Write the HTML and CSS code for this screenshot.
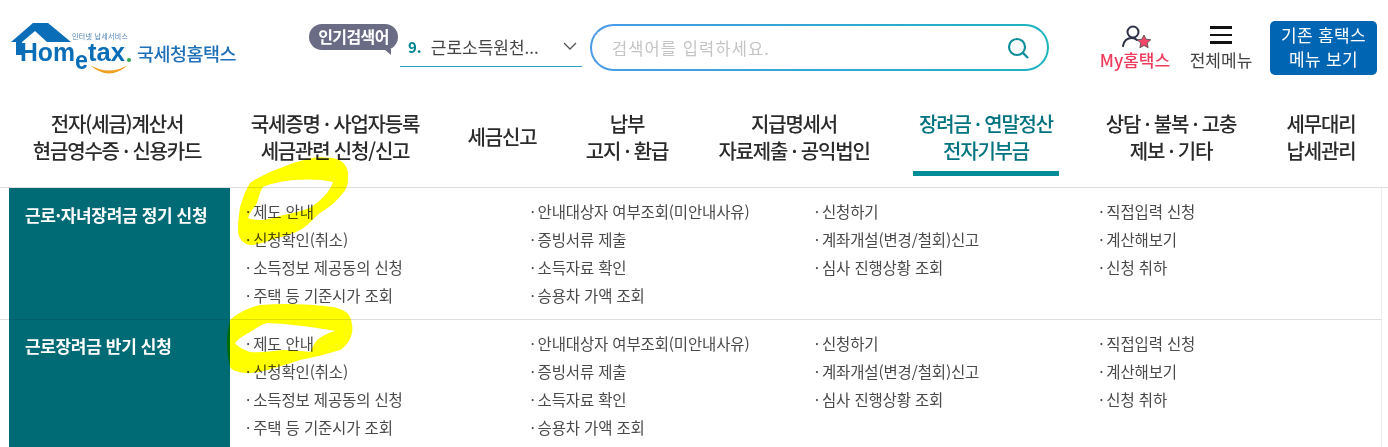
FILE: index.html
```html
<!DOCTYPE html>
<html lang="ko">
<head>
    <meta charset="UTF-8">
    <meta name="viewport" content="width=device-width, initial-scale=1.0">
    <title>국세청 홈택스</title>
    <link rel="stylesheet" href="styles.css">
</head>
<body>

<header class="top">
    <a class="logo">
        <svg width="126" height="58" viewBox="0 0 126 58">
            <path d="M0 20 L22 1 H37 L60 20 H36 L24 9 L11 20 V33 H5 V20 Z" fill="#0a6db8"/>
            <text x="61" y="17" class="logo-small" textLength="56">인터넷 납세서비스</text>
            <text x="9" y="39" class="logo-word" textLength="55" lengthAdjust="spacingAndGlyphs">Hom</text>
            <text x="64" y="47" class="logo-word" textLength="13" lengthAdjust="spacingAndGlyphs">e</text>
            <text x="77" y="39" class="logo-word" textLength="37" lengthAdjust="spacingAndGlyphs">tax</text>
            <circle cx="118" cy="38" r="2" fill="#2fa84f"/>
            <path d="M79 43 Q98 60 117 43 Q98 54 79 43 Z" fill="#f0a020"/>
        </svg>
        <span class="logo-name">국세청홈택스</span>
    </a>

    <span class="badge">인기검색어</span>
    <div class="popular">
        <b>9.</b>
        <span>근로소득원천...</span>
        <svg width="14" height="8" viewBox="0 0 14 8"><path d="M1 1 L7 7 L13 1" fill="none" stroke="#555" stroke-width="1.3"/></svg>
    </div>

    <div class="search">
        <span class="placeholder">검색어를 입력하세요.</span>
        <svg width="24" height="24" viewBox="0 0 24 24"><circle cx="11" cy="11" r="8" fill="none" stroke="#0f8f9c" stroke-width="2.2"/><path d="M17 17 L22 22" stroke="#0f8f9c" stroke-width="2.4"/></svg>
    </div>

    <a class="my">
        <svg width="32" height="28" viewBox="0 0 32 28">
            <circle cx="14" cy="8" r="5.5" fill="none" stroke="#2c3148" stroke-width="2"/>
            <path d="M4 22 C5 16 9 14 13 14 C15 14 17 15 18 16" fill="none" stroke="#2c3148" stroke-width="2" stroke-linecap="round"/>
            <path d="M25 11 L27.1 15.2 L31.7 15.8 L28.3 19.1 L29.1 23.7 L25 21.5 L20.9 23.7 L21.7 19.1 L18.3 15.8 L22.9 15.2 Z" fill="#f0476a" stroke="#444" stroke-width=".8"/>
        </svg>
        <span>My홈택스</span>
    </a>
    <a class="all">
        <span class="burger"><i></i><i></i><i></i></span>
        <span>전체메뉴</span>
    </a>
    <a class="old-btn">기존 홈택스<br>메뉴 보기</a>
</header>

<nav class="gnb">
    <a style="width:216px"><span>전자(세금)계산서<br>현금영수증 · 신용카드</span></a>
    <a style="width:220px"><span>국세증명 · 사업자등록<br>세금관련 신청/신고</span></a>
    <a style="width:114px"><span>세금신고</span></a>
    <a style="width:136px"><span>납부<br>고지 · 환급</span></a>
    <a style="width:198px"><span>지급명세서<br>자료제출 · 공익법인</span></a>
    <a style="width:186px" class="on"><span>장려금 · 연말정산<br>전자기부금</span></a>
    <a style="width:184px"><span>상담 · 불복 · 고충<br>제보 · 기타</span></a>
    <a style="width:116px"><span>세무대리<br>납세관리</span></a>
</nav>

<main class="menu">
    <section class="menu-row">
        <h3>근로·자녀장려금 정기 신청</h3>
        <ul>
            <li>제도 안내</li>
            <li>안내대상자 여부조회(미안내사유)</li>
            <li>신청하기</li>
            <li>직접입력 신청</li>
            <li>신청확인(취소)</li>
            <li>증빙서류 제출</li>
            <li>계좌개설(변경/철회)신고</li>
            <li>계산해보기</li>
            <li>소득정보 제공동의 신청</li>
            <li>소득자료 확인</li>
            <li>심사 진행상황 조회</li>
            <li>신청 취하</li>
            <li>주택 등 기준시가 조회</li>
            <li>승용차 가액 조회</li>
        </ul>
    </section>
    <section class="menu-row">
        <h3>근로장려금 반기 신청</h3>
        <ul>
            <li>제도 안내</li>
            <li>안내대상자 여부조회(미안내사유)</li>
            <li>신청하기</li>
            <li>직접입력 신청</li>
            <li>신청확인(취소)</li>
            <li>증빙서류 제출</li>
            <li>계좌개설(변경/철회)신고</li>
            <li>계산해보기</li>
            <li>소득정보 제공동의 신청</li>
            <li>소득자료 확인</li>
            <li>심사 진행상황 조회</li>
            <li>신청 취하</li>
            <li>주택 등 기준시가 조회</li>
            <li>승용차 가액 조회</li>
        </ul>
    </section>
</main>

<!-- 형광펜 표시 -->
<svg class="marker" width="1388" height="447" viewBox="0 0 1388 447">
    <path fill-rule="evenodd" fill="#ffff00" d="M333 158 C344 160 349 168 348 177 C348 186 346 190 343 193 C335 203 328 208 320 213 C312 220 306 227 300 230 C292 234 285 236 277 238 C268 241 258 245 250 245 C243 244 238 238 238 230 C238 221 239 214 240 207 C243 197 246 189 250 183 C260 176 272 171 283 167 C295 162 306 159 317 157 Z M248 218 C250 212 254 208 257 203 C259 197 260 191 263 187 C272 183 283 181 293 180 C307 179 322 179 333 182 C332 186 329 190 327 193 C322 199 316 204 310 208 C302 211 293 213 283 215 C276 217 270 219 263 220 C258 220 252 220 248 218 Z"/>
    <path fill-rule="evenodd" fill="#ffff00" d="M230 320 C238 313 248 308 260 305 C285 303 310 304 333 307 C342 309 348 312 350 317 C352 322 353 328 352 333 C350 341 346 346 340 350 C328 354 314 357 300 360 C284 365 266 372 250 373 C240 373 233 371 230 367 C228 359 227 351 227 343 C227 335 228 327 230 320 Z M235 343 C239 338 245 335 250 332 C255 329 260 325 267 323 C290 324 314 327 335 331 C328 333 322 336 317 340 C314 344 312 348 310 352 C301 351 292 350 283 350 C272 351 261 353 250 352 C244 350 238 347 235 343 Z"/>
</svg>

</body>
</html>
```

FILE: styles.css
```css
* {
    box-sizing: border-box;
}
html, body {
    height: 447px;
    overflow: hidden;
}
body {
    margin: 0;
    background-color: #fff;
    font-family: "Noto Sans CJK KR", "Noto Sans", sans-serif;
    color: #333;
}

/* top */
.top {
    display: flex;
    height: 100px;
    padding-left: 11px;
    align-items: flex-start;
}
.logo {
    display: flex;
    align-items: flex-start;
    width: 298px;
    padding-top: 22px;
}
.logo-small {
    font-size: 7px;
    fill: #4a7fb5;
}
.logo-word {
    font-family: "Liberation Sans", sans-serif;
    font-weight: bold;
    font-size: 25px;
    fill: #0a6db8;
}
.logo-name {
    margin-top: 18px;
    font-size: 18.5px;
    font-weight: 500;
    letter-spacing: -0.5px;
    color: #1f70b8;
    white-space: nowrap;
}
.badge {
    position: relative;
    width: 89px;
    height: 26px;
    margin-top: 24px;
    background-color: #6a6b85;
    border-radius: 13px;
    color: #fff;
    font-size: 16px;
    font-weight: 700;
    line-height: 24px;
    text-align: center;
    letter-spacing: -0.6px;
}
.badge::after {
    content: "";
    position: absolute;
    right: 7px;
    bottom: -5px;
    border-top: 6px solid #6a6b85;
    border-left: 7px solid transparent;
}
.popular {
    display: flex;
    align-items: center;
    width: 182px;
    height: 43px;
    margin-top: 24px;
    margin-left: 2px;
    padding: 2px 5px 0 8px;
    border-bottom: 1px solid #2ba3bb;
    font-size: 17px;
    color: #444;
}
.popular b {
    color: #00838f;
    font-size: 15px;
    margin-right: 9px;
}
.popular svg {
    margin-left: auto;
}
.search {
    display: flex;
    align-items: center;
    justify-content: space-between;
    width: 459px;
    height: 47px;
    margin-top: 24px;
    margin-left: 8px;
    padding: 0 17px 0 20px;
    border: 2px solid transparent;
    border-radius: 24px;
    background: linear-gradient(#fff, #fff) padding-box, linear-gradient(90deg, #4a9be8, #1db4bf) border-box;
}
.placeholder {
    font-size: 16.5px;
    color: #c4c4c4;
    letter-spacing: 1.1px;
}
.my, .all {
    display: flex;
    flex-direction: column;
    align-items: center;
    font-size: 17px;
    line-height: 20px;
}
.my {
    width: 72px;
    margin-top: 24px;
    margin-left: 50px;
    color: #ee3b5b;
    font-weight: 500;
    white-space: nowrap;
}
.my svg {
    margin-bottom: -2px;
}
.all {
    width: 64px;
    margin-top: 26px;
    margin-left: 18px;
    color: #444;
    white-space: nowrap;
}
.burger {
    display: flex;
    flex-direction: column;
    gap: 5px;
    margin-bottom: 6px;
}
.burger i {
    display: block;
    width: 22px;
    height: 2.5px;
    background-color: #111;
}
.old-btn {
    width: 107px;
    height: 54px;
    margin-top: 21px;
    margin-left: 17px;
    padding-top: 2px;
    background-color: #0066b3;
    border-radius: 5px;
    color: #fff;
    font-size: 17px;
    line-height: 24px;
    text-align: center;
    letter-spacing: 0.3px;
}

/* gnb */
.gnb {
    display: flex;
    height: 88px;
    padding-left: 9px;
    border-bottom: 1px solid #ddd;
}
.gnb a {
    display: flex;
    justify-content: center;
    text-align: center;
    font-size: 20px;
    font-weight: 500;
    line-height: 27px;
    letter-spacing: -1.2px;
    color: #2b2b2b;
}
.gnb a span {
    display: block;
    height: 76px;
    padding: 10px 6px 0;
}
.gnb a.on {
    color: #00737f;
}
.gnb a.on span {
    border-bottom: 5px solid #008b96;
}
.gnb a:nth-child(3) span {
    padding-top: 23px;
}

/* menu */
.menu {
    margin-right: 6px;
    border-right: 1px solid #eee;
}
.menu-row {
    display: flex;
    height: 132px;
    border-bottom: 1px solid #ddd;
}
.menu-row h3 {
    flex: none;
    width: 221px;
    margin: 0 0 -1px 9px;
    padding: 15px 0 0 16px;
    background-color: #006b75;
    border-bottom: 1px solid #00606a;
    color: #fff;
    font-size: 17px;
    font-weight: 700;
    line-height: 24px;
    letter-spacing: -0.35px;
}
.menu-row ul {
    display: grid;
    flex: 1;
    grid-template-columns: repeat(4, 284.4px);
    grid-auto-rows: 28px;
    align-content: start;
    margin: 0;
    padding: 9px 0 0 16px;
    list-style: none;
    font-size: 15.5px;
    line-height: 28px;
    color: #4a4a4a;
    letter-spacing: -0.15px;
}
.menu-row li::before {
    content: "·";
    margin-right: 3px;
}
.menu-row:last-child {
    border-bottom: none;
}
.menu-row:last-child h3 {
    padding-top: 14px;
}

/* over everything */
.marker {
    position: absolute;
    top: 0;
    left: 0;
    mix-blend-mode: multiply;
    pointer-events: none;
}
```
